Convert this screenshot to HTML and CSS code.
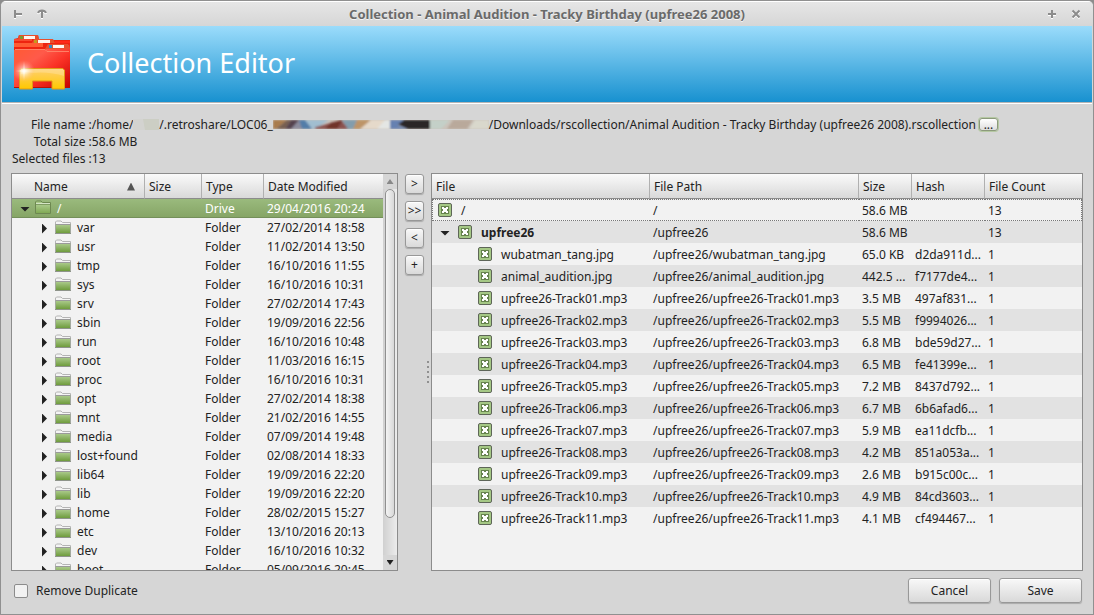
FILE: index.html
```html
<!DOCTYPE html>
<html lang="en">
<head>
<meta charset="utf-8">
<title>Collection - Animal Audition - Tracky Birthday (upfree26 2008)</title>
<link rel="stylesheet" href="styles.css">
</head>
<body>
<svg class="defs" aria-hidden="true">
  <defs>
    <linearGradient id="leaf" x1="0" y1="0" x2="0" y2="1"><stop offset="0" stop-color="#a9c989"/><stop offset="1" stop-color="#6f9c3d"/></linearGradient>
    <symbol id="folder" viewBox="0 0 16 16">
      <path d="M.5 13V2l1-1h4.500l1.500 1.500h8V13z" fill="#f4f4f4" stroke="#b4b4b4"/>
      <path d="M1 4.500h14" stroke="#9a9a9a"/>
      <path d="M1 5h14v8H1z" fill="url(#leaf)"/>
      <path d="M0 13.500h16" stroke="#8e948a"/>
      <path d="M.5 4v9M15.500 4v9" stroke="#a3a99e"/>
    </symbol>
    <symbol id="folder-selected" viewBox="0 0 16 16">
      <path d="M.5 13.500V2l1-1h4.500l1.500 1.500h8v11z" fill="#a9c989" stroke="#6d8851"/>
      <path d="M1 3.500h14" stroke="#d4e4c4"/>
      <path d="M1 4.500h14" stroke="#7f9c62"/>
      <path d="M1 5h14v8H1z" fill="url(#leaf)" opacity=".7"/>
    </symbol>
  </defs>
</svg>
<main class="window">
  <header class="titlebar">
    <div class="controls">
      <button aria-label="Menu"><svg width="10" height="10" viewBox="0 0 10 10"><path d="M2 1v8M2 5h7" /></svg></button>
      <button aria-label="Shade"><svg width="10" height="10" viewBox="0 0 10 10"><path d="M5 1v8M1 4Q2 1.500 5 1.500T9 4" /></svg></button>
    </div>
    <h1>Collection - Animal Audition - Tracky Birthday (upfree26 2008)</h1>
    <div class="controls end">
      <button aria-label="Maximize"><svg width="10" height="10" viewBox="0 0 10 10"><path d="M5 1v8M1 5h8" /></svg></button>
      <button aria-label="Close"><svg width="10" height="10" viewBox="0 0 10 10"><path d="M1.500 1.500l7 7M8.500 1.500l-7 7" /></svg></button>
    </div>
  </header>
  <div class="banner">
    <svg class="logo" width="60" height="58" viewBox="0 0 60 58" aria-hidden="true">
      <defs>
        <linearGradient id="red" x1="0" y1="0" x2="1" y2="1"><stop offset="0" stop-color="#ff5a30"/><stop offset=".35" stop-color="#ff5a4a"/><stop offset=".6" stop-color="#fa3226"/><stop offset="1" stop-color="#c40000"/></linearGradient>
        <linearGradient id="gold" x1="0" y1="0" x2="0" y2="1"><stop offset="0" stop-color="#ffd070"/><stop offset="1" stop-color="#ffc800"/></linearGradient>
        <radialGradient id="glow"><stop offset="0" stop-color="#fff"/><stop offset=".3" stop-color="#fff" stop-opacity=".5"/><stop offset="1" stop-color="#ffb090" stop-opacity="0"/></radialGradient>
      </defs>
      <path d="M2 16V5l4-1 1-3h19l1 5h31v12H2z" fill="#ee2410"/>
      <path d="M7 1h19l1 4H6z" fill="#e8502e"/>
      <path d="M2 6h18" stroke="#ff7350" fill="none"/>
      <path d="M20 9l2-4h19l2 4z" fill="#e8502e"/>
      <path d="M2 11h29" stroke="#ff5c34" stroke-width="4" fill="none"/>
      <path d="M43 8h15" stroke="#ff2a18" stroke-width="2" fill="none"/>
      <path d="M2 54V16h31l3-5h21l1 3v40z" fill="url(#red)"/>
      <path d="M33 15l3-5h20l2 5z" fill="#e8502e"/>
      <path d="M3 15.500h30l2 2h22" stroke="#ff8066" fill="none"/>
      <path d="M2 53.500h56" stroke="#b31208" fill="none"/>
      <path d="M12 2h11v3H12zM26 6h12v3H26zM41 11h11v3H41z" fill="#fff6ee"/>
      <path d="M8 2h3v3H8z" fill="#7c9c2d"/><path d="M22 6h3v3h-3z" fill="#c79a1b"/><path d="M37 11h3v3h-3z" fill="#2d8cc9"/>
      <path d="M7.500 55V36l2-1.500h41l2 1.500v19H40v-8H20.500v8z" fill="url(#gold)" stroke="#e09a18"/>
      <path d="M9 36l1-1h41l1 1v6Q35 36 9 40z" fill="#fff" opacity=".2"/>
      <circle cx="12" cy="37" r="11" fill="url(#glow)"/>
      <path d="M12 27l1 9 9 1-9 1-1 9-1-9-8-1 8-1z" fill="#fff" opacity=".35"/>
    </svg>
    <h2>Collection Editor</h2>
  </div>
  <section class="info">
    <span class="key">File name :</span>
    <span class="value path">/home/<svg class="smudge" width="26" height="11" viewBox="0 0 26 11" aria-hidden="true"><path fill="#d3d3d0" d="M0 0h26v11H0z"/><path fill="#cccec4" d="M10 0h16v11H12z"/></svg>/.retroshare/LOC06_<svg class="smudge wide" width="216" height="9" viewBox="0 0 216 10" preserveAspectRatio="none" aria-hidden="true">
      <defs><filter id="soft" x="0" y="0" width="1" height="1"><feGaussianBlur stdDeviation="1"/></filter></defs>
      <path fill="#cbc4bc" d="M0 0h216v10H0z"/>
      <g filter="url(#soft)">
      <path fill="#a97b4d" d="M0 0h14L3 10H0z"/><path fill="#765f51" d="M14 0L3 10h9l6-10z"/>
      <path fill="#54434e" d="M18 0h9l-4 10H12z"/><path fill="#8d8c9c" d="M26 0l4 10H18z"/><path fill="#527da8" d="M26 0h8l6 10H29z"/><path fill="#a1bed0" d="M32 0h24L42 10h-3z"/>
      <path fill="#8b5250" d="M42 8L68 0l8 10H42z"/><path fill="#71362c" d="M58 3l12-3-6 10H52z"/><path fill="#829dad" d="M69 0h20l-6 10h-8z"/>
      <path fill="#bd9468" d="M84 0h14l-9 10H80z"/><path fill="#e5d9ca" d="M98 0h14l-5 10H87z"/><path fill="#e4e6e4" d="M112 0h5v10h-13z"/>
      <path fill="#6681b1" d="M117 0h16l-8 6 10 4h-18z"/><path fill="#2c2526" d="M131 0h26v10h-22l-10-5z"/>
      <path fill="#c4d0c8" d="M157 0h20l-9 10h-11z"/><path fill="#b9a99b" d="M180 0h20l-6 10h-20z"/><path fill="#d9d8cc" d="M202 0h14v10h-20z"/>
      </g>
    </svg>/Downloads/rscollection/Animal Audition - Tracky Birthday (upfree26 2008).rscollection<button class="browse" aria-label="Browse">...</button></span>
    <span class="key">Total size :</span><span class="value">58.6 MB</span>
    <span class="key">Selected files :</span><span class="value">13</span>
  </section>
  <section class="panes">
    <div class="pane source">
      <div class="viewport">
      <table class="tree">
        <colgroup><col class="c-name"><col class="c-size"><col class="c-type"><col></colgroup>
        <thead><tr><th class="name">Name<i class="sort"></i></th><th>Size</th><th>Type</th><th>Date Modified</th></tr></thead>
        <tbody>
          <tr class="selected"><td><div class="node root"><button class="toggle open" aria-label="Collapse"></button><svg class="icon"><use href="#folder-selected"/></svg>/</div></td><td></td><td>Drive</td><td>29/04/2016 20:24</td></tr>
          <tr><td><div class="node"><button class="toggle" aria-label="Expand"></button><svg class="icon"><use href="#folder"/></svg>var</div></td><td></td><td>Folder</td><td>27/02/2014 18:58</td></tr>
          <tr><td><div class="node"><button class="toggle" aria-label="Expand"></button><svg class="icon"><use href="#folder"/></svg>usr</div></td><td></td><td>Folder</td><td>11/02/2014 13:50</td></tr>
          <tr><td><div class="node"><button class="toggle" aria-label="Expand"></button><svg class="icon"><use href="#folder"/></svg>tmp</div></td><td></td><td>Folder</td><td>16/10/2016 11:55</td></tr>
          <tr><td><div class="node"><button class="toggle" aria-label="Expand"></button><svg class="icon"><use href="#folder"/></svg>sys</div></td><td></td><td>Folder</td><td>16/10/2016 10:31</td></tr>
          <tr><td><div class="node"><button class="toggle" aria-label="Expand"></button><svg class="icon"><use href="#folder"/></svg>srv</div></td><td></td><td>Folder</td><td>27/02/2014 17:43</td></tr>
          <tr><td><div class="node"><button class="toggle" aria-label="Expand"></button><svg class="icon"><use href="#folder"/></svg>sbin</div></td><td></td><td>Folder</td><td>19/09/2016 22:56</td></tr>
          <tr><td><div class="node"><button class="toggle" aria-label="Expand"></button><svg class="icon"><use href="#folder"/></svg>run</div></td><td></td><td>Folder</td><td>16/10/2016 10:48</td></tr>
          <tr><td><div class="node"><button class="toggle" aria-label="Expand"></button><svg class="icon"><use href="#folder"/></svg>root</div></td><td></td><td>Folder</td><td>11/03/2016 16:15</td></tr>
          <tr><td><div class="node"><button class="toggle" aria-label="Expand"></button><svg class="icon"><use href="#folder"/></svg>proc</div></td><td></td><td>Folder</td><td>16/10/2016 10:31</td></tr>
          <tr><td><div class="node"><button class="toggle" aria-label="Expand"></button><svg class="icon"><use href="#folder"/></svg>opt</div></td><td></td><td>Folder</td><td>27/02/2014 18:38</td></tr>
          <tr><td><div class="node"><button class="toggle" aria-label="Expand"></button><svg class="icon"><use href="#folder"/></svg>mnt</div></td><td></td><td>Folder</td><td>21/02/2016 14:55</td></tr>
          <tr><td><div class="node"><button class="toggle" aria-label="Expand"></button><svg class="icon"><use href="#folder"/></svg>media</div></td><td></td><td>Folder</td><td>07/09/2014 19:48</td></tr>
          <tr><td><div class="node"><button class="toggle" aria-label="Expand"></button><svg class="icon"><use href="#folder"/></svg>lost+found</div></td><td></td><td>Folder</td><td>02/08/2014 18:33</td></tr>
          <tr><td><div class="node"><button class="toggle" aria-label="Expand"></button><svg class="icon"><use href="#folder"/></svg>lib64</div></td><td></td><td>Folder</td><td>19/09/2016 22:20</td></tr>
          <tr><td><div class="node"><button class="toggle" aria-label="Expand"></button><svg class="icon"><use href="#folder"/></svg>lib</div></td><td></td><td>Folder</td><td>19/09/2016 22:20</td></tr>
          <tr><td><div class="node"><button class="toggle" aria-label="Expand"></button><svg class="icon"><use href="#folder"/></svg>home</div></td><td></td><td>Folder</td><td>28/02/2015 15:27</td></tr>
          <tr><td><div class="node"><button class="toggle" aria-label="Expand"></button><svg class="icon"><use href="#folder"/></svg>etc</div></td><td></td><td>Folder</td><td>13/10/2016 20:13</td></tr>
          <tr><td><div class="node"><button class="toggle" aria-label="Expand"></button><svg class="icon"><use href="#folder"/></svg>dev</div></td><td></td><td>Folder</td><td>16/10/2016 10:32</td></tr>
          <tr><td><div class="node"><button class="toggle" aria-label="Expand"></button><svg class="icon"><use href="#folder"/></svg>boot</div></td><td></td><td>Folder</td><td>05/09/2016 20:45</td></tr>
        </tbody>
      </table>
      </div>
      <div class="scrollbar">
        <button class="up" aria-label="Scroll up"></button>
        <div class="track"><div class="thumb"></div></div>
        <button class="down" aria-label="Scroll down"></button>
      </div>
    </div>
    <div class="transfer">
      <button>&gt;</button><button>&gt;&gt;</button><button>&lt;</button><button>+</button>
    </div>
    <div class="splitter"><i></i><i></i><i></i><i></i><i></i></div>
    <div class="pane">
      <table class="files">
        <colgroup><col class="f-file"><col class="f-path"><col class="f-size"><col class="f-hash"><col></colgroup>
        <thead><tr><th>File</th><th>File Path</th><th>Size</th><th>Hash</th><th>File Count</th></tr></thead>
        <tbody>
          <tr class="current"><td><label class="l0"><input type="checkbox" checked>/</label></td><td>/</td><td>58.6 MB</td><td></td><td>13</td></tr>
          <tr><td><div class="branch"><button class="toggle open" aria-label="Collapse"></button><label><input type="checkbox" checked><b>upfree26</b></label></div></td><td>/upfree26</td><td>58.6 MB</td><td></td><td>13</td></tr>
          <tr><td><label class="l2"><input type="checkbox" checked>wubatman_tang.jpg</label></td><td>/upfree26/wubatman_tang.jpg</td><td>65.0 KB</td><td>d2da911d...</td><td>1</td></tr>
          <tr><td><label class="l2"><input type="checkbox" checked>animal_audition.jpg</label></td><td>/upfree26/animal_audition.jpg</td><td>442.5 ...</td><td>f7177de4...</td><td>1</td></tr>
          <tr><td><label class="l2"><input type="checkbox" checked>upfree26-Track01.mp3</label></td><td>/upfree26/upfree26-Track01.mp3</td><td>3.5 MB</td><td>497af831...</td><td>1</td></tr>
          <tr><td><label class="l2"><input type="checkbox" checked>upfree26-Track02.mp3</label></td><td>/upfree26/upfree26-Track02.mp3</td><td>5.5 MB</td><td>f9994026...</td><td>1</td></tr>
          <tr><td><label class="l2"><input type="checkbox" checked>upfree26-Track03.mp3</label></td><td>/upfree26/upfree26-Track03.mp3</td><td>6.8 MB</td><td>bde59d27...</td><td>1</td></tr>
          <tr><td><label class="l2"><input type="checkbox" checked>upfree26-Track04.mp3</label></td><td>/upfree26/upfree26-Track04.mp3</td><td>6.5 MB</td><td>fe41399e...</td><td>1</td></tr>
          <tr><td><label class="l2"><input type="checkbox" checked>upfree26-Track05.mp3</label></td><td>/upfree26/upfree26-Track05.mp3</td><td>7.2 MB</td><td>8437d792...</td><td>1</td></tr>
          <tr><td><label class="l2"><input type="checkbox" checked>upfree26-Track06.mp3</label></td><td>/upfree26/upfree26-Track06.mp3</td><td>6.7 MB</td><td>6b6afad6...</td><td>1</td></tr>
          <tr><td><label class="l2"><input type="checkbox" checked>upfree26-Track07.mp3</label></td><td>/upfree26/upfree26-Track07.mp3</td><td>5.9 MB</td><td>ea11dcfb...</td><td>1</td></tr>
          <tr><td><label class="l2"><input type="checkbox" checked>upfree26-Track08.mp3</label></td><td>/upfree26/upfree26-Track08.mp3</td><td>4.2 MB</td><td>851a053a...</td><td>1</td></tr>
          <tr><td><label class="l2"><input type="checkbox" checked>upfree26-Track09.mp3</label></td><td>/upfree26/upfree26-Track09.mp3</td><td>2.6 MB</td><td>b915c00c...</td><td>1</td></tr>
          <tr><td><label class="l2"><input type="checkbox" checked>upfree26-Track10.mp3</label></td><td>/upfree26/upfree26-Track10.mp3</td><td>4.9 MB</td><td>84cd3603...</td><td>1</td></tr>
          <tr><td><label class="l2"><input type="checkbox" checked>upfree26-Track11.mp3</label></td><td>/upfree26/upfree26-Track11.mp3</td><td>4.1 MB</td><td>cf494467...</td><td>1</td></tr>
        </tbody>
      </table>
    </div>
  </section>
  <footer>
    <label><input type="checkbox">Remove Duplicate</label>
    <div class="actions"><button>Cancel</button><button>Save</button></div>
  </footer>
</main>
</body>
</html>
```
FILE: styles.css
```css
* { box-sizing: border-box; }
body {
  margin: 0;
  background: #8c8c8c;
  color: #222;
  font: 12px/17px "Noto Sans", "Open Sans", sans-serif;
}
button, input { font: inherit; color: inherit; margin: 0; padding: 0; }
button { border: 0; background: none; }
svg { flex: none; }
.defs { position: absolute; width: 0; height: 0; }

.window {
  display: flex;
  flex-direction: column;
  height: 100vh;
  border: 1px solid #909090;
  border-radius: 6px 6px 0 0;
  background: #d6d6d6;
  overflow: hidden;
}
.titlebar {
  display: flex;
  align-items: center;
  height: 25px;
  flex: none;
  padding: 0 9px;
  border-top: 1px solid #fff;
  background: linear-gradient(#e6e6e6, #d6d6d6);
}
.titlebar h1 {
  flex: 1;
  margin: 0;
  text-align: center;
  font-size: 13px;
  font-weight: 700;
  color: #6a6a6a;
  text-shadow: 0 1px #f4f4f4;
}
.controls { display: flex; gap: 8px; }
.controls button { display: grid; place-items: center; width: 16px; height: 16px; }
.controls path { fill: none; stroke: #8c8c8c; stroke-width: 2; }
.controls svg { filter: drop-shadow(0 1px #fff); }

.banner {
  display: flex;
  align-items: center;
  gap: 15px;
  height: 78px;
  flex: none;
  margin: 0 1px;
  padding: 0 10px 3px;
  background: linear-gradient(#9bdcfb, #1690cf);
  border-bottom: 1px solid #fff;
  box-shadow: inset 0 -1px #b5b5b5;
}
.banner h2 { margin: 0; font-size: 27px; line-height: 38px; font-weight: 400; color: #fff; }

.info {
  display: grid;
  grid-template-columns: max-content 1fr;
  flex: none;
  padding: 12px 11px 6px;
}
.key { text-align: right; }
.value { white-space: nowrap; }
.path { display: flex; align-items: center; }
.browse {
  width: 19px;
  height: 13px;
  margin-left: 3px;
  border: 1px solid #8c9a7c;
  border-radius: 3px;
  background: linear-gradient(#fff, #ddd);
  box-shadow: 0 0 0 1px #b5c8a2;
  line-height: 8px;
}

.panes { display: flex; flex: 1; min-height: 0; padding: 0 10px; }
.pane {
  flex: 1;
  min-width: 0;
  border: 1px solid #8c8c8c;
  background: #f2f2f2;
  overflow: hidden;
}
.source { display: flex; flex: 0 0 387px; }
.viewport { flex: 1; min-width: 0; overflow: hidden; }

table { width: 100%; table-layout: fixed; border-collapse: separate; border-spacing: 0; }
th {
  height: 25px;
  padding: 0 4px;
  border-right: 1px solid #b0b0b0;
  border-bottom: 1px solid #8c8c8c;
  background: linear-gradient(#fafafa, #d9d9d9);
  font-weight: 400;
  text-align: left;
}
th:last-child { border-right: 0; }
td { padding: 0 3px; white-space: nowrap; overflow: hidden; }
.c-name { width: 133px; }
.c-size { width: 57px; }
.c-type { width: 62px; }
.f-file { width: 218px; }
.f-path { width: 209px; }
.f-size { width: 53px; }
.f-hash { width: 73px; }

.name { padding: 0 9px 0 22px; }
.sort {
  float: right;
  width: 8px;
  height: 8px;
  margin-top: 5px;
  background: #555;
  clip-path: polygon(50% 0, 100% 100%, 0 100%);
}
.tree td { height: 19px; }
.node { display: flex; align-items: center; padding-left: 27px; }
.root { padding-left: 5px; }
.icon { width: 16px; height: 16px; margin: 0 6px 0 8px; }
.root .icon { margin-left: 5px; }
.selected { color: #fff; }
.selected td { background: linear-gradient(#9aba7d, #86a566); border-bottom: 1px solid #748f5a; }
.toggle {
  width: 5px;
  height: 10px;
  flex: none;
  margin-top: 2px;
  background: #222;
  clip-path: polygon(0 0, 100% 50%, 0 100%);
}
.toggle.open { width: 10px; height: 5px; clip-path: polygon(0 0, 100% 0, 50% 100%); }

.scrollbar { display: flex; flex-direction: column; width: 14px; }
.scrollbar button { display: grid; place-items: center; height: 15px; background: #d6d6d6; }
.scrollbar button::before { content: ""; width: 7px; height: 5px; background: #222; clip-path: polygon(0 0, 100% 0, 50% 100%); }
.scrollbar .up::before { background: #888; clip-path: polygon(50% 0, 100% 100%, 0 100%); }
.track { flex: 1; padding: 0 2px; background: linear-gradient(90deg, #d0d0d0, #ececec); }
.thumb { height: 90%; border: 1px solid #909090; border-radius: 5px; background: linear-gradient(90deg, #f4f4f4, #d8d8d8); }

.transfer { display: flex; flex-direction: column; gap: 7px; padding: 1px 0 0 7px; }
.transfer button, .actions button {
  border: 1px solid #989898;
  border-radius: 3px;
  background: linear-gradient(#f8f8f8, #d9d9d9);
  box-shadow: 0 1px 1px #aaa, inset 0 1px #fff;
}
.transfer button { width: 19px; height: 20px; line-height: 16px; }
.splitter { display: flex; flex-direction: column; align-items: center; justify-content: center; gap: 3px; width: 7px; }
.splitter i { width: 2px; height: 2px; background: #909090; }

.files tbody td { height: 22px; }
.files tbody tr:nth-child(even) { background: #e2e2e2; }
.current td { border-top: 1px dotted #777; border-bottom: 1px dotted #777; }
.current td:first-child { border-left: 1px dotted #777; }
.current td:last-child { border-right: 1px dotted #777; }
label { display: flex; align-items: center; gap: 9px; }
.branch { display: flex; align-items: center; gap: 8px; padding-left: 5px; }
.l0 { padding-left: 2px; }
.l2 { padding-left: 43px; }
input {
  appearance: none;
  display: grid;
  place-items: center;
  width: 14px;
  height: 14px;
  flex: none;
  border: 1px solid #8c8c8c;
  border-radius: 2px;
  background: #f2f2f2;
}
input:checked { border-color: #5e6658; background: #a5c885; }
input:checked::before, input:checked::after { content: ""; grid-area: 1 / 1; }
input:checked::before { width: 8px; height: 8px; background: #67834e; }
input:checked::after {
  width: 6px;
  height: 6px;
  background: #fff;
  clip-path: polygon(0 0, 34% 0, 34% 17%, 66% 17%, 66% 0, 100% 0, 100% 34%, 83% 34%, 83% 66%, 100% 66%, 100% 100%, 66% 100%, 66% 83%, 34% 83%, 34% 100%, 0 100%, 0 66%, 17% 66%, 17% 34%, 0 34%);
}

footer {
  display: flex;
  align-items: center;
  justify-content: space-between;
  flex: none;
  height: 43px;
  padding: 0 11px 4px 13px;
}
footer label { gap: 8px; }
.actions { display: flex; gap: 8px; }
.actions button { width: 83px; height: 25px; }
```
